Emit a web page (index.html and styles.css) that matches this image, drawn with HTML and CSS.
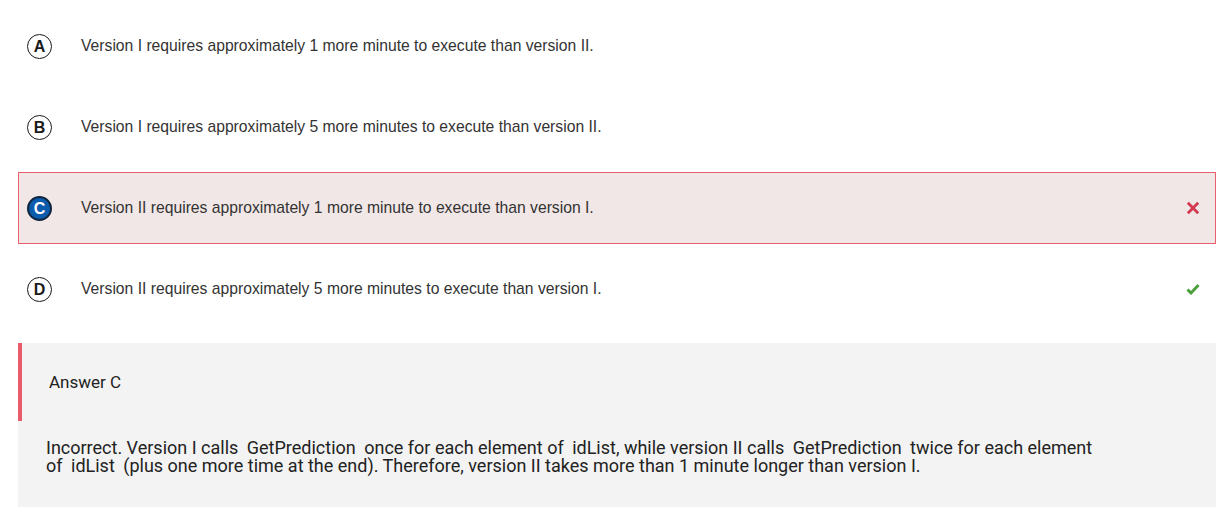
FILE: index.html
```html
<!DOCTYPE html>
<html>
<head>
<meta charset="utf-8">
<link rel="stylesheet" href="styles.css">
</head>
<body>
<div class="quiz">
  <div class="options">
    <div class="option">
      <span class="letter">A</span>
      <span class="text">Version I requires approximately 1 more minute to execute than version II.</span>
    </div>
    <div class="option">
      <span class="letter">B</span>
      <span class="text">Version I requires approximately 5 more minutes to execute than version II.</span>
    </div>
    <div class="option selected">
      <span class="letter">C</span>
      <span class="text">Version II requires approximately 1 more minute to execute than version I.</span>
      <svg class="mark" width="14" height="14" viewBox="0 0 14 14"><path d="M1.8 1.8 L12.2 12.2 M12.2 1.8 L1.8 12.2" stroke="#d23a4f" stroke-width="2.8" stroke-linecap="butt" fill="none"/></svg>
    </div>
    <div class="option">
      <span class="letter">D</span>
      <span class="text">Version II requires approximately 5 more minutes to execute than version I.</span>
      <svg class="mark" width="14" height="12" viewBox="0 0 14 12"><path d="M1.5 6.5 L5 10 L12.5 2" stroke="#4a9e3c" stroke-width="2.9" stroke-linecap="butt" stroke-linejoin="miter" fill="none"/></svg>
    </div>
  </div>
  <div class="explain">
    <div class="answer">Answer C</div>
    <div class="body">Incorrect. Version I calls <code>GetPrediction</code> once for each element of <code class="tight">idList</code>, while version II calls <code>GetPrediction</code> twice for each element of <code>idList</code> (plus one more time at the end). Therefore, version II takes more than 1 minute longer than version I.</div>
  </div>
</div>
</body>
</html>
```
FILE: styles.css
```css
html, body {
  margin: 0;
  padding: 0;
  background: #ffffff;
}
.quiz {
  padding: 10px 6px 0 18px;
}
.options {
  display: flex;
  flex-direction: column;
  gap: 9px;
}
.option {
  height: 72px;
  box-sizing: border-box;
  border: 1px solid transparent;
  display: flex;
  align-items: center;
  padding-left: 8px;
  padding-right: 15px;
  padding-bottom: 1px;
  font-family: "Liberation Sans", Arial, sans-serif;
  font-size: 15.7px;
  color: #333333;
}
.option.selected {
  background: #f2e7e7;
  border-color: #e8606f;
}
.letter {
  width: 25px;
  height: 25px;
  box-sizing: border-box;
  border: 1.5px solid #1a1a1a;
  border-radius: 50%;
  display: flex;
  align-items: center;
  justify-content: center;
  font-family: "Liberation Sans", Arial, sans-serif;
  font-weight: bold;
  font-size: 16px;
  color: #1a1a1a;
  flex: none;
  margin-top: 2px;
}
.selected .letter {
  background: #0b5cad;
  border-color: #10263f;
  color: #ffffff;
  border-width: 2px;
}
.text {
  margin-left: 29px;
  flex: 1;
}
.mark {
  flex: none;
}
.explain {
  margin-top: 18px;
  background: #f3f3f3;
  padding-bottom: 33px;
}
.answer {
  height: 78px;
  box-sizing: border-box;
  border-left: 4px solid #e85b6a;
  padding-left: 27px;
  display: flex;
  align-items: center;
  font-family: Roboto, sans-serif;
  font-size: 17px;
  color: #222222;
}
.body {
  padding: 18px 0 0 28px;
  max-width: 1060px;
  font-family: Roboto, sans-serif;
  font-size: 18px;
  line-height: 18px;
  color: #222222;
}
.body code {
  font-family: Roboto, sans-serif;
  padding: 0 4px;
}
.body code.tight {
  padding-right: 0;
}
```
